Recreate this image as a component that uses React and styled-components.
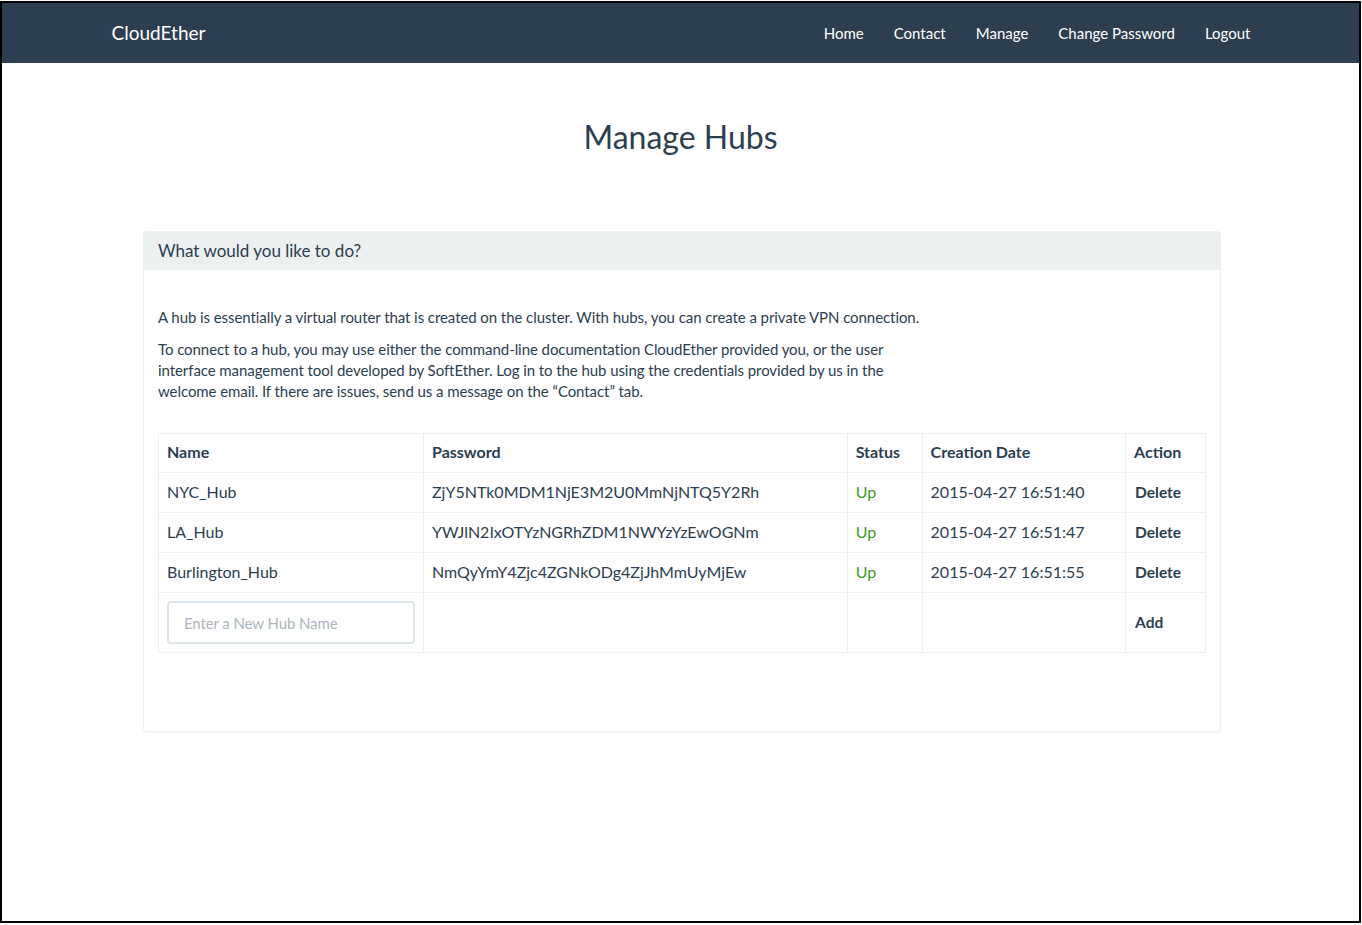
import React from 'react'
import styled, { createGlobalStyle } from 'styled-components'

const GlobalStyle = createGlobalStyle`
  html, body {
    margin: 0;
    padding: 0;
    background: #fff;
  }
  body {
    font-family: Lato, "Open Sans", "Liberation Sans", sans-serif;
    font-size: 15px;
    line-height: 1.42857;
    color: #2c3e50;
  }
  * { box-sizing: border-box; }
`

const Frame = styled.div`
  margin-top: 1px;
  width: 1361px;
  height: 922px;
  border: 2px solid #000;
  display: flex;
  flex-direction: column;
  overflow: hidden;
`

const Navbar = styled.nav`
  height: 60px;
  flex-shrink: 0;
  background-color: #2c3e50;
`

const NavContainer = styled.div`
  width: 1170px;
  height: 100%;
  margin: 0 auto;
  padding: 0 15px;
  display: flex;
  align-items: center;
  justify-content: space-between;
`

const Brand = styled.a`
  color: #fff;
  font-size: 19px;
  text-decoration: none;
  margin-left: 1px;
`

const NavList = styled.ul`
  list-style: none;
  margin: 0 -15px 0 0;
  padding: 0;
  display: flex;
`

const NavLink = styled.a`
  display: block;
  padding: 0 15px;
  color: #fff;
  font-size: 15px;
  text-decoration: none;
  line-height: 60px;
`

const Main = styled.main`
  flex: 1;
  display: flex;
  flex-direction: column;
  align-items: center;
`

const Title = styled.h2`
  margin: 56px 0 0;
  font-size: 32px;
  font-weight: 400;
  line-height: 35px;
  color: #2c3e50;
`

const Panel = styled.section`
  width: 1078px;
  margin-top: 77px;
  margin-left: 3px;
  border: 1px solid #ecf0f1;
  border-radius: 4px;
  box-shadow: 0 1px 1px rgba(0, 0, 0, 0.04);
`

const PanelHeading = styled.div`
  background: #ecf0f1;
  height: 38px;
  padding: 0 14px;
  display: flex;
  align-items: center;
  font-size: 17px;
  color: #2c3e50;
`

const PanelBody = styled.div`
  padding: 37px 14px 78px;
`

const Para = styled.p`
  margin: 0 0 10.5px;
  font-size: 15px;
  line-height: 21px;
  letter-spacing: -0.07px;
`

const Table = styled.table`
  width: 100%;
  margin-top: 31px;
  border-collapse: collapse;
  font-size: 16px;
`

const Th = styled.th`
  text-align: left;
  font-weight: 700;
  height: 39px;
  padding: 0 8px;
  border: 1px solid #ecf0f1;
  width: ${p => p.$w}px;
`

const Td = styled.td`
  height: ${p => (p.$tall ? 60 : 40)}px;
  padding: ${p => (p.$bold ? '1px 8px 0 9px' : '1px 8px 0')};
  border: 1px solid #ecf0f1;
  color: ${p => (p.$ok ? '#3d9a2b' : '#2c3e50')};
  font-weight: ${p => (p.$bold ? 700 : 400)};
  font-size: ${p => (p.$bold ? 15.5 : 16)}px;
`

const Input = styled.input`
  width: 248px;
  height: 43px;
  padding: 0 15px;
  border: 2px solid #dce4ec;
  border-radius: 4px;
  font-family: inherit;
  font-size: 15px;
  letter-spacing: -0.1px;
  color: #2c3e50;
  outline: none;
  &::placeholder {
    color: #acb6c0;
  }
`

const hubs = [
  { name: 'NYC_Hub', pass: 'ZjY5NTk0MDM1NjE3M2U0MmNjNTQ5Y2Rh', date: '2015-04-27 16:51:40' },
  { name: 'LA_Hub', pass: 'YWJlN2IxOTYzNGRhZDM1NWYzYzEwOGNm', date: '2015-04-27 16:51:47' },
  { name: 'Burlington_Hub', pass: 'NmQyYmY4Zjc4ZGNkODg4ZjJhMmUyMjEw', date: '2015-04-27 16:51:55' },
]

const App = () => {
  return <>
    <GlobalStyle />
    <Frame>
      <Navbar>
        <NavContainer>
          <Brand href="#">CloudEther</Brand>
          <NavList>
            {['Home', 'Contact', 'Manage', 'Change Password', 'Logout'].map(l => (
              <li key={l}><NavLink href="#">{l}</NavLink></li>
            ))}
          </NavList>
        </NavContainer>
      </Navbar>
      <Main>
        <Title>Manage Hubs</Title>
        <Panel>
          <PanelHeading>What would you like to do?</PanelHeading>
          <PanelBody>
            <Para>A hub is essentially a virtual router that is created on the cluster. With hubs, you can create a private VPN connection.</Para>
            <Para>
              To connect to a hub, you may use either the command-line documentation CloudEther provided you, or the user<br />
              interface management tool developed by SoftEther. Log in to the hub using the credentials provided by us in the<br />
              welcome email. If there are issues, send us a message on the “Contact” tab.
            </Para>
            <Table>
              <thead>
                <tr>
                  <Th $w={265}>Name</Th>
                  <Th $w={424}>Password</Th>
                  <Th $w={75}>Status</Th>
                  <Th $w={204}>Creation Date</Th>
                  <Th $w={80}>Action</Th>
                </tr>
              </thead>
              <tbody>
                {hubs.map(h => (
                  <tr key={h.name}>
                    <Td>{h.name}</Td>
                    <Td>{h.pass}</Td>
                    <Td $ok>Up</Td>
                    <Td>{h.date}</Td>
                    <Td $bold>Delete</Td>
                  </tr>
                ))}
                <tr>
                  <Td $tall><Input placeholder="Enter a New Hub Name" /></Td>
                  <Td $tall />
                  <Td $tall />
                  <Td $tall />
                  <Td $tall $bold>Add</Td>
                </tr>
              </tbody>
            </Table>
          </PanelBody>
        </Panel>
      </Main>
    </Frame>
  </>
}

export default App
